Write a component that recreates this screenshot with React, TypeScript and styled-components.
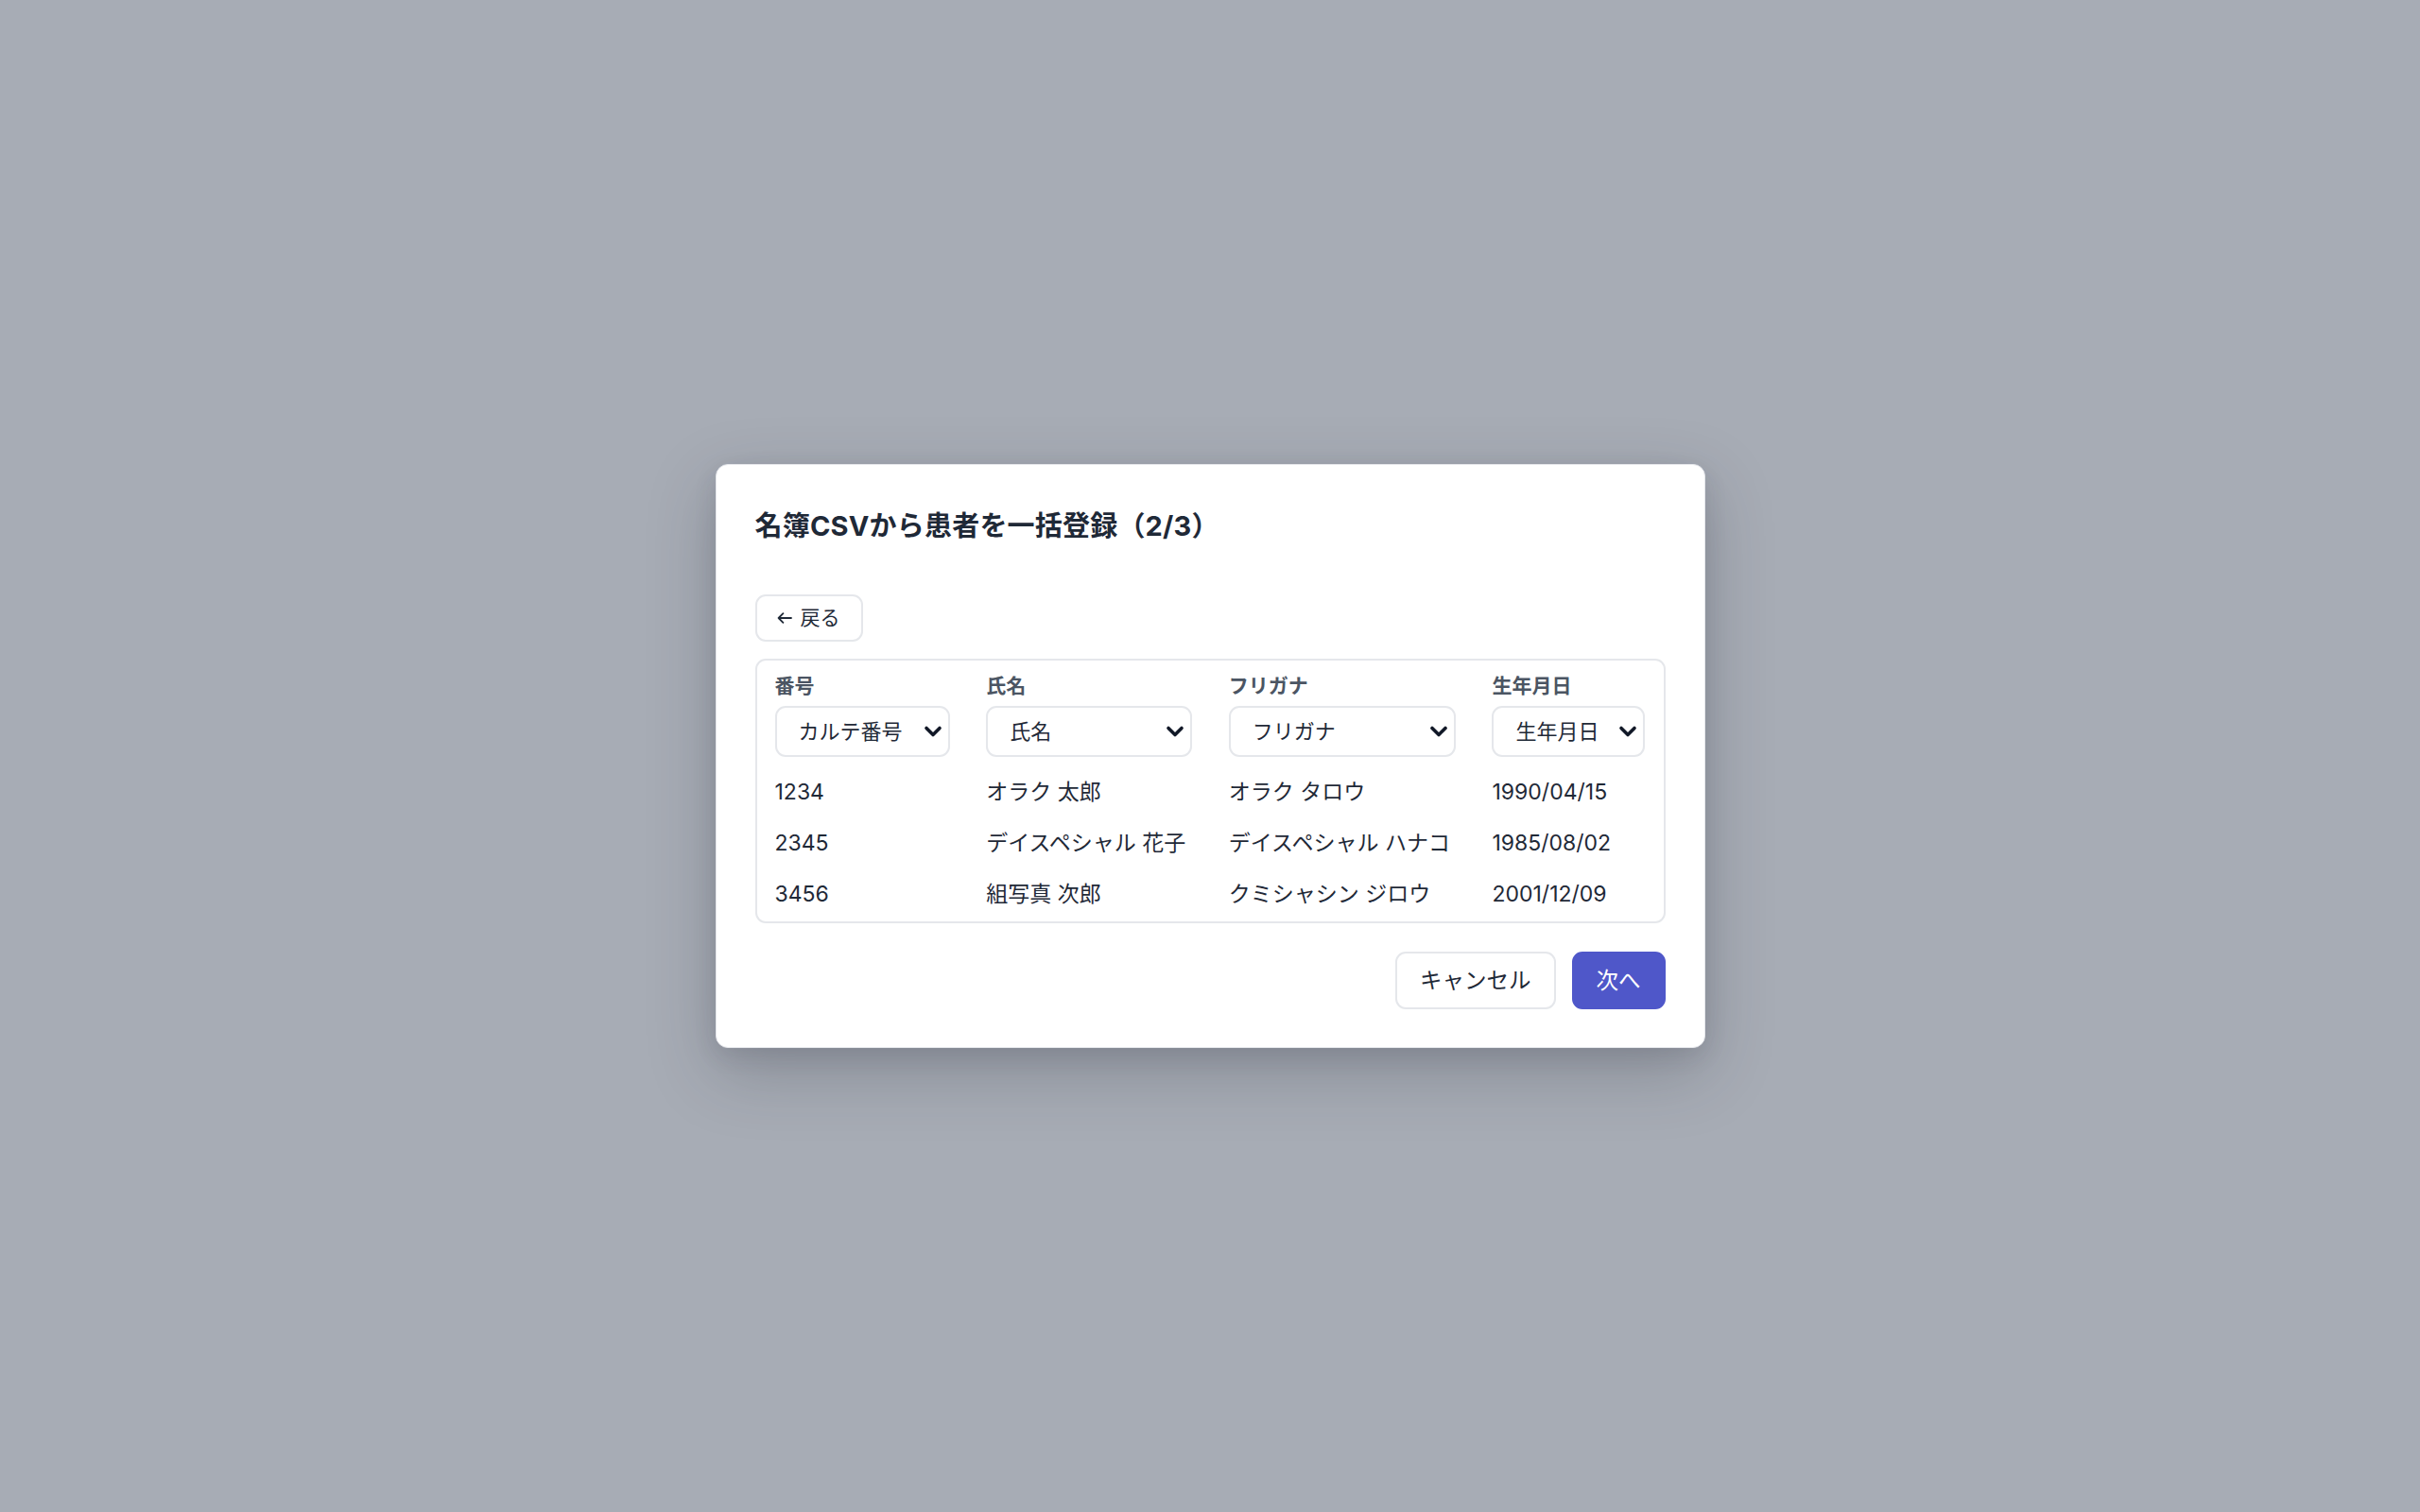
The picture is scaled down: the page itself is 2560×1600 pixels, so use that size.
import React from "react";
import styled, { createGlobalStyle } from "styled-components";

const GlobalStyle = createGlobalStyle`
	html, body {
		margin: 0;
		padding: 0;
	}
	body {
		font-family: "Inter", "Noto Sans CJK JP", sans-serif;
		color: #1f2937;
	}
	* {
		box-sizing: border-box;
	}
`;

// --- OVERLAY + MODAL ---------------------------------------------------------------------------------
const Overlay = styled.div`
	width: 100vw;
	height: 100vh;
	display: flex;
	align-items: center;
	justify-content: center;
	background-color: #a7acb5;
`;
const Modal = styled.div`
	width: 1047px;
	display: flex;
	flex-direction: column;
	padding: 40px 41px 40px;
	background-color: #ffffff;
	border: 1px solid #e5e7eb;
	border-radius: 13px;
	box-shadow: 0px 24px 70px rgba(40, 44, 56, 0.26),
		0px 8px 24px rgba(40, 44, 56, 0.1);
`;
const Title = styled.h2`
	margin: 0;
	font-size: 29px;
	font-weight: 700;
	line-height: 50px;
	color: #1f2937;
	letter-spacing: 0.2px;
`;

// --- BACK BUTTON ---------------------------------------------------------------------------------
const BackButton = styled.button`
	align-self: flex-start;
	margin-top: 47px;
	height: 50px;
	display: flex;
	align-items: center;
	gap: 9px;
	padding: 0 22px 0 21px;
	background: #ffffff;
	border: 2px solid #e5e7eb;
	border-radius: 11px;
	font-family: inherit;
	font-size: 21px;
	line-height: 30px;
	color: #1f2937;
	cursor: pointer;
`;

// --- MAPPING TABLE ---------------------------------------------------------------------------------
const Table = styled.div`
	margin-top: 18px;
	display: grid;
	grid-template-columns: 185px 218px 240px 162px;
	justify-content: space-between;
	padding: 12px 19px 2px;
	border: 2px solid #e5e7eb;
	border-radius: 11px;
`;
const HeaderCell = styled.div`
	display: flex;
	flex-direction: column;
	gap: 6px;
	padding-bottom: 10px;
`;
const Label = styled.span`
	font-size: 21px;
	font-weight: 700;
	line-height: 30px;
	color: #4b5563;
`;
const SelectWrap = styled.div`
	position: relative;
	height: 54px;
`;
const Select = styled.select`
	appearance: none;
	width: 100%;
	height: 100%;
	padding: 0 40px 0 23px;
	background: #ffffff;
	border: 2px solid #e5e7eb;
	border-radius: 11px;
	font-family: inherit;
	font-size: 22px;
	color: #1f2937;
	outline: none;
`;
const Chevron = styled.svg`
	position: absolute;
	right: 8px;
	top: 50%;
	transform: translateY(-50%);
	pointer-events: none;
`;
const DataCell = styled.div`
	height: 54px;
	display: flex;
	align-items: center;
	font-size: 23px;
	line-height: 30px;
	color: #1f2937;
	white-space: nowrap;
`;

// --- FOOTER ---------------------------------------------------------------------------------
const Footer = styled.div`
	margin-top: 30px;
	display: flex;
	justify-content: flex-end;
	gap: 17px;
`;
const FooterButton = styled.button<{ primary?: boolean }>`
	height: 61px;
	padding: 0 24px;
	border-radius: 11px;
	font-family: inherit;
	font-size: 23.5px;
	line-height: 30px;
	cursor: pointer;
	border: 2px solid ${(props) => (props.primary ? "#4f57c9" : "#e5e7eb")};
	background-color: ${(props) => (props.primary ? "#4f57c9" : "#ffffff")};
	color: ${(props) => (props.primary ? "#ffffff" : "#1f2937")};
`;

const columns = [
	{ label: "番号", value: "カルテ番号" },
	{ label: "氏名", value: "氏名" },
	{ label: "フリガナ", value: "フリガナ" },
	{ label: "生年月日", value: "生年月日" },
];

const rows = [
	["1234", "オラク 太郎", "オラク タロウ", "1990/04/15"],
	["2345", "デイスペシャル 花子", "デイスペシャル ハナコ", "1985/08/02"],
	["3456", "組写真 次郎", "クミシャシン ジロウ", "2001/12/09"],
];

export default function App() {
	return (
		<>
			<GlobalStyle />
			<Overlay>
				<Modal>
					<Title>名簿CSVから患者を一括登録（2/3）</Title>
					<BackButton>
						<svg width="16" height="12" viewBox="0 0 16 12" fill="none">
							<path
								d="M15 6H1.6M6.4 1.2L1.6 6l4.8 4.8"
								stroke="#1f2937"
								strokeWidth="1.8"
								strokeLinecap="round"
								strokeLinejoin="round"
							/>
						</svg>
						戻る
					</BackButton>
					<Table>
						{columns.map((col) => (
							<HeaderCell key={col.label}>
								<Label>{col.label}</Label>
								<SelectWrap>
									<Select defaultValue={col.value}>
										<option value={col.value}>{col.value}</option>
									</Select>
									<Chevron width="20" height="14" viewBox="0 0 20 14" fill="none">
										<path
											d="M3 3.5l7 7 7-7"
											stroke="#111827"
											strokeWidth="3.6"
											strokeLinecap="round"
											strokeLinejoin="round"
										/>
									</Chevron>
								</SelectWrap>
							</HeaderCell>
						))}
						{rows.map((row) =>
							row.map((cell, i) => <DataCell key={row[0] + i}>{cell}</DataCell>)
						)}
					</Table>
					<Footer>
						<FooterButton>キャンセル</FooterButton>
						<FooterButton primary>次へ</FooterButton>
					</Footer>
				</Modal>
			</Overlay>
		</>
	);
}
